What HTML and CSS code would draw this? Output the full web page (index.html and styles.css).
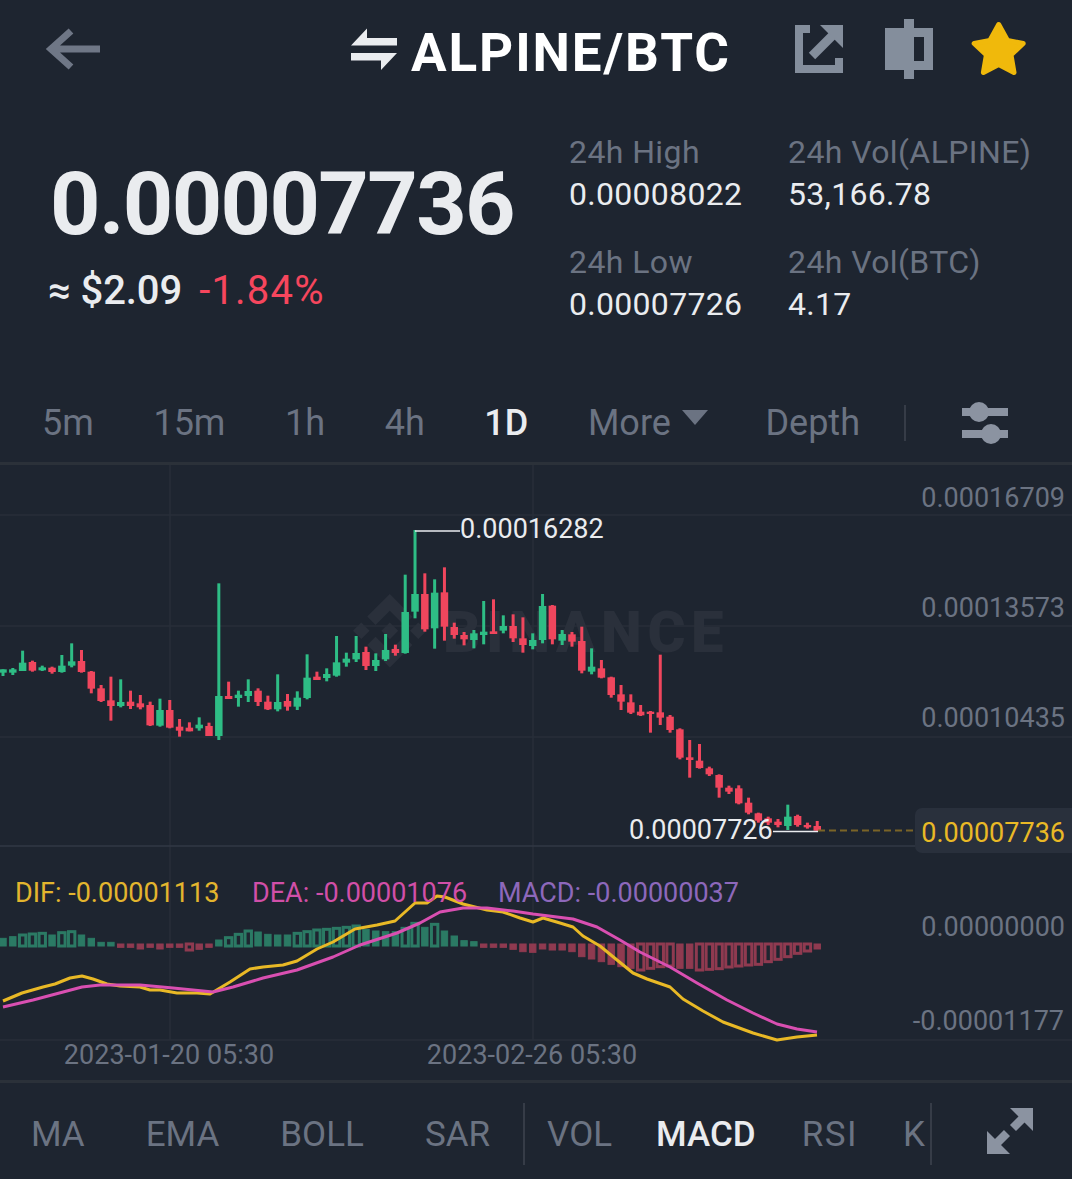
FILE: index.html
```html
<!DOCTYPE html>
<html lang="en">
<head>
  <meta charset="UTF-8" />
  <meta name="viewport" content="width=device-width, initial-scale=1.0"/>
  <title>ALPINE/BTC</title>
  <link rel="stylesheet" href="styles.css">
</head>
<body>

  <div class="top-bar">
    <svg class="back-icon" viewBox="44 28 58 42"><path d="M100 49H52M71 31 51 49l20 18"/></svg>
    <svg class="swap-icon" viewBox="350 27 48 43"><path d="M367 27.5V37h30v7.5h-46zM351 52h46l-16 17v-9.5h-30z"/></svg>
    <div class="pair">ALPINE/BTC</div>
    <svg class="share-icon" viewBox="795 25 48 48"><path d="M795 25h15v8h-7v32h32v-7h8v15h-48zM820 25h23v23z"/><path class="shaft" d="m812 56 20-20"/></svg>
    <svg class="candle-icon" viewBox="885 19 49 60"><path fill-rule="evenodd" d="M904 19h10v9h19v42h-19v9h-10v-9h-19V28h19zM914 37v24h10V37z"/></svg>
    <svg class="star-icon" viewBox="970 20 58 58"><path d="M998.7 24.500 1007.500 40.500 1023.200 43.500 1011 55 1014 72.500 998.700 64.500 983.400 72.500 986.400 55 974.200 43.500 989.900 40.500z"/></svg>
  </div>

  <div class="summary">
    <div class="price-box">
      <div class="price">0.00007736</div>
      <div class="price-sub">
        <span class="fiat">≈ $2.09</span>
        <span class="change">-1.84%</span>
      </div>
    </div>
    <div class="stats">
      <div class="stat"><div class="stat-label">24h High</div><div class="stat-value">0.00008022</div></div>
      <div class="stat"><div class="stat-label">24h Vol(ALPINE)</div><div class="stat-value">53,166.78</div></div>
      <div class="stat"><div class="stat-label">24h Low</div><div class="stat-value">0.00007726</div></div>
      <div class="stat"><div class="stat-label">24h Vol(BTC)</div><div class="stat-value">4.17</div></div>
    </div>
  </div>

  <div class="tabs">
    <span class="tab">5m</span>
    <span class="tab">15m</span>
    <span class="tab">1h</span>
    <span class="tab">4h</span>
    <span class="tab active">1D</span>
    <span class="tab more">More<i class="caret"></i></span>
    <span class="tab">Depth</span>
    <span class="divider"></span>
    <svg class="sliders-icon" viewBox="964 397 47 42"><path d="M964 403h46v8h-46zM964 425h46v8h-46z"/><circle cx="981" cy="407" r="10"/><circle cx="993" cy="429" r="10"/></svg>
  </div>

  <svg class="chart" id="chart" viewBox="0 465 1072 615">
    <g class="grid">
      <path d="M0 515H1072M0 626H1072M0 737H1072M0 1040H1072M170 465V1040M533 465V1040"/>
      <path class="grid-split" d="M0 846H1072"/>
    </g>

    <g class="watermark">
      <path transform="translate(353 594) scale(2.3)" d="M9.800 13.450 16 7.250l6.200 6.200 3.600-3.600L16 0 6.200 9.800zM0 16l3.600-3.600L7.200 16l-3.600 3.600zm9.800 2.550 6.200 6.200 6.200-6.200 3.600 3.600L16 32 6.200 22.200zM24.800 16l3.600-3.600L32 16l-3.600 3.600zM19.650 16 16 12.350 12.350 16 16 19.650z"/>
      <text x="443" y="652">BINANCE</text>
    </g>

    <g id="histogram"></g>
    <g id="candles"></g>

    <polyline class="line-dif" points="3,1001 22,993 43,987 55,984 70,978 82,976 93,979 107,984 120,986 140,987 150,990 160,990 177,993 197,993 210,994 230,982 250,969 263,967 283,965 297,961 317,949 333,942 355,929 377,925 395,921 415,903 420,903 427,903 437,896 445,897 463,904 487,910 503,912 520,918 533,922 543,918 560,923 573,927 583,936 600,946 617,960 633,973 647,979 670,987 683,999 703,1011 723,1022 753,1033 777,1040 797,1037 817,1035"/>
    <polyline class="line-dea" points="3,1007 33,1000 82,987 100,985 140,985 173,988 213,992 233,987 263,978 297,970 333,957 360,945 397,933 420,923 440,912 463,908 487,908 513,911 533,914 573,919 597,927 620,940 640,952 670,967 697,983 727,1000 753,1013 777,1024 797,1029 817,1032"/>

    <path class="price-dash" d="M818 830.500H914"/>
    <rect class="price-tag" x="915" y="808" width="170" height="45" rx="7"/>

    <g class="axis">
      <text x="1065" y="507">0.00016709</text>
      <text x="1065" y="617">0.00013573</text>
      <text x="1065" y="727">0.00010435</text>
      <text x="1065" y="936">0.00000000</text>
      <text x="1064" y="1030">-0.00001177</text>
    </g>
    <text class="last-price" x="1065" y="842">0.00007736</text>

    <path class="mark-line" d="M415 531H460M773 831.500H818"/>
    <text class="mark" x="460" y="538">0.00016282</text>
    <text class="mark" x="629" y="839">0.00007726</text>

    <text class="macd-dif" x="15" y="902">DIF: -0.00001113</text>
    <text class="macd-dea" x="252" y="902">DEA: -0.00001076</text>
    <text class="macd-macd" x="498" y="902">MACD: -0.00000037</text>

    <text class="date" x="169" y="1064">2023-01-20 05:30</text>
    <text class="date" x="532" y="1064">2023-02-26 05:30</text>
  </svg>

  <div class="indicators">
    <span class="ind">MA</span>
    <span class="ind">EMA</span>
    <span class="ind">BOLL</span>
    <span class="ind">SAR</span>
    <span class="divider main-end"></span>
    <span class="ind vol">VOL</span>
    <span class="ind macd active">MACD</span>
    <span class="ind rsi">RSI</span>
    <span class="ind k">K</span>
    <span class="divider sub-end"></span>
    <svg class="expand-icon" viewBox="979 1108 46 46"><path d="M1002 1108h23v23zM979 1131v23h23z"/><path class="shaft" d="m1005 1128 10-10M989 1143l10-10"/></svg>
  </div>

  <script src="chart.js"></script>
</body>
</html>
```

FILE: styles.css
```css
* {
  box-sizing: border-box;
  margin: 0;
  padding: 0;
}

body {
  width: 1072px;
  height: 1179px;
  overflow: hidden;
  background-color: #1e2530;
  font-family: "Roboto", sans-serif;
  color: #eaecef;
}

/* header */
.top-bar {
  display: flex;
  align-items: center;
  height: 98px;
  padding-left: 44px;
}

.top-bar svg {
  flex: none;
}

.back-icon {
  width: 58px;
  height: 42px;
  fill: none;
  stroke: #6f7786;
  stroke-width: 7;
}

.swap-icon {
  width: 48px;
  height: 43px;
  margin-left: 248px;
  fill: #eaecef;
}

.pair {
  width: 384px;
  margin-left: 13px;
  padding-top: 8px;
  font-size: 53px;
  font-weight: 700;
  color: #fff;
  letter-spacing: 1.9px;
}

.share-icon {
  width: 48px;
  height: 48px;
  fill: #848e9c;
}

.shaft {
  fill: none;
  stroke: #848e9c;
  stroke-width: 9;
}

.candle-icon {
  width: 49px;
  height: 60px;
  margin-left: 42px;
  fill: #848e9c;
}

.star-icon {
  width: 58px;
  height: 58px;
  margin-left: 36px;
  fill: #f0b90b;
  stroke: #f0b90b;
  stroke-width: 5;
  stroke-linejoin: round;
}

/* price summary */
.summary {
  display: flex;
  height: 286px;
}

.price-box {
  width: 569px;
  padding: 53px 0 0 50px;
}

.price {
  font-size: 88px;
  font-weight: 700;
  line-height: 106px;
  letter-spacing: -1.6px;
}

.price-sub {
  display: flex;
  gap: 17px;
  margin: 11px 0 0 -2px;
  font-size: 40px;
  line-height: 46px;
}

.fiat {
  font-weight: 500;
  letter-spacing: -0.1px;
}

.change {
  letter-spacing: 1.2px;
  color: #f6465d;
}

.stats {
  display: grid;
  grid-template-columns: 219px 260px;
  grid-auto-rows: 110px;
  padding-top: 32px;
}

.stat-label {
  font-size: 32px;
  line-height: 44px;
  letter-spacing: 0.4px;
  color: #6b7382;
}

.stat-value {
  font-size: 32px;
  line-height: 41px;
  letter-spacing: 0.3px;
  color: #eaecef;
}

/* interval tabs */
.tabs {
  display: flex;
  align-items: center;
  gap: 59.6px;
  height: 81px;
  padding: 0 0 1px 42px;
  border-bottom: 3px solid #2b3139;
  font-size: 36px;
  color: #6b7382;
}

.tab.active,
.ind.active {
  color: #eaecef;
  font-weight: 500;
}

.more {
  display: flex;
  align-items: center;
  gap: 11px;
  margin-right: -2px;
}

.caret {
  width: 0;
  height: 0;
  margin-bottom: 10px;
  border-left: 13px solid transparent;
  border-right: 13px solid transparent;
  border-top: 15px solid #6b7382;
}

.divider {
  flex: none;
  width: 2px;
  height: 36px;
  background-color: #363c47;
}

.tabs .divider {
  margin-left: -16px;
}

.sliders-icon {
  width: 47px;
  height: 42px;
  margin-left: -3px;
  fill: #8b93a1;
}

/* chart */
.chart {
  display: block;
  width: 1072px;
  height: 615px;
}

.grid path {
  fill: none;
  stroke: #282e39;
  stroke-width: 1.5;
}

.grid .grid-split {
  stroke: #323845;
}

.watermark {
  fill: #2a303b;
}

.chart .watermark text {
  font-size: 58px;
  font-weight: 900;
  letter-spacing: 5.6px;
}

.up {
  stroke: #2ebd85;
}

.down {
  stroke: #f0465d;
}

.wick {
  stroke-width: 3;
}

.body {
  stroke-width: 7.5;
}

.hist-up {
  fill: #2b7a64;
  stroke: #2b7a64;
}

.hist-down {
  fill: #8f3a50;
  stroke: #8f3a50;
}

.hist-hollow {
  fill: none;
  stroke-width: 3;
}

.line-dif,
.line-dea {
  fill: none;
  stroke-width: 3;
  stroke-linejoin: round;
}

.line-dif {
  stroke: #e9b926;
}

.line-dea {
  stroke: #d94fb1;
}

.price-dash {
  stroke: #7a6427;
  stroke-width: 2;
  stroke-dasharray: 7 4;
}

.price-tag {
  fill: #29303c;
}

.chart text {
  font-size: 27px;
}

.axis text {
  text-anchor: end;
  fill: #6b7382;
}

.last-price {
  text-anchor: end;
  fill: #e9b926;
}

.mark {
  fill: #eaecef;
}

.mark-line {
  fill: none;
  stroke: #eaecef;
  stroke-width: 1.5;
}

.macd-dif {
  fill: #e3b52e;
}

.macd-dea {
  fill: #d14fa8;
}

.macd-macd {
  fill: #8d68bb;
}

.date {
  text-anchor: middle;
  fill: #6b7382;
}

/* indicator tabs */
.indicators {
  display: flex;
  align-items: center;
  gap: 61px;
  height: 99px;
  padding: 6px 0 0 31px;
  border-top: 3px solid #2b3139;
  font-size: 35px;
  color: #6b7382;
}

.indicators .divider {
  height: 62px;
  margin-left: -28px;
}

.indicators .vol {
  margin-left: -39px;
}

.indicators .macd {
  margin-left: -17px;
}

.indicators .rsi {
  margin-left: -15px;
  letter-spacing: 1.5px;
}

.indicators .k {
  margin-left: -16px;
}

.indicators .sub-end {
  margin-left: -56px;
}

.expand-icon {
  width: 46px;
  height: 46px;
  margin: -6px 0 0 -6px;
  fill: #8b93a1;
}

.expand-icon .shaft {
  stroke: #8b93a1;
  stroke-width: 8.5;
}
```

FILE: chart.js
```js
// candle data read off the picture at 3x: [up, wickTop, wickBottom, bodyTop, bodyBottom]
const leftCandles = [
  [1,508,528,508,518],[1,504,525,508,518],[1,452,513,488,513],[0,482,515,486,512],[1,497,513,502,511],
  [0,500,521,503,516],[1,465,518,497,516],[1,430,502,484,497],[0,450,518,483,516],[0,513,580,515,566],
  [0,555,606,565,603],[0,530,662,601,618],[1,538,622,606,618],[0,572,627,605,618],[0,585,628,610,622],
  [0,605,678,615,676],[1,596,680,630,677],[0,600,685,630,683],[0,657,710,680,692],[0,667,694,683,694],
  [1,652,692,674,685],[0,668,708,678,708],[1,250,720,588,708],[0,545,597,588,597],[1,572,620,584,594],
  [1,538,606,573,588],[0,565,618,572,606],[0,587,630,605,628],[1,523,634,606,628],[0,582,632,603,620],
  [1,574,630,593,620],[1,463,598,533,594],[0,515,540,530,540],[1,505,544,522,534],[1,408,530,487,527],
  [1,458,500,476,488],[1,408,486,459,478],[0,440,510,456,498],[1,460,513,480,498],[1,402,483,450,478],
  [0,434,467,447,459],[1,224,461,336,459]
];
const rightCandles = [
  [1,60,325,252,305],[0,190,365,252,358],[1,208,416,248,355],[0,172,392,247,350],[0,338,386,351,375],
  [0,366,406,375,388],[1,360,415,370,390],[1,273,403,365,375],[0,268,372,364,372],[1,316,370,348,362],
  [0,313,396,348,385],[0,322,428,385,405],[1,370,418,390,408],[1,252,400,288,390],[0,285,403,287,388],
  [1,360,405,372,392],[0,366,410,373,395],[0,350,490,393,482],[1,415,493,470,485],[0,450,505,475,503],
  [0,500,563,502,555],[0,525,600,553,575],[0,553,612,577,608],[0,585,618,605,616],[0,603,668,605,612],
  [0,434,645,607,623],[0,615,668,620,660],[0,655,748,658,743],[0,690,803,742,750],[0,702,776,752,774],
  [0,770,798,775,793],[0,793,863,795,833],[0,827,852,833,845],[0,826,883,835,880],[0,863,913,878,908],
  [0,908,938,910,932],[0,920,945,925,938],[0,927,952,935,945],[1,884,960,920,948],[0,914,950,918,945],
  [0,938,956,945,952],[0,933,962,948,962]
];

// macd bars, 3x height from the zero line, up is positive
const bars = [
  20,25,30,33,35,30,37,40,30,20,8,8,-7,-7,-12,-7,-12,-7,-7,-15,-13,-7,
  15,22,32,42,39,32,30,30,35,40,45,47,50,53,57,47,42,40,40,50,65,53,62,42,27,13,10,
  -7,-7,-7,-13,-20,-22,-12,-15,-15,-20,-35,-42,-50,-58,-65,-70,-75,-70,-65,-63,-70,-70,
  -75,-73,-71,-66,-63,-60,-58,-50,-43,-35,-25,-18,-12
];
const hollow = [2,3,4,6,7,19,23,24,25,30,31,32,33,34,35,36,41,42,44,65,66,67,68,71,72,73,74,75,76,77,78,79,80,81,82];

const SVG_NS = "http://www.w3.org/2000/svg";
const candleX = i => 3 + 9.81 * i;

function add(parent, tag, attrs) {
  const el = document.createElementNS(SVG_NS, tag);
  for (const key in attrs) el.setAttribute(key, attrs[key]);
  parent.appendChild(el);
}

function drawCandles() {
  const group = document.getElementById("candles");
  const all = [
    ...leftCandles.map(c => [c, 500]),
    ...rightCandles.map(c => [c, 510])
  ];
  all.forEach(([c, offset], i) => {
    const x = candleX(i);
    const y = v => offset + v / 3;
    const color = c[0] ? "up" : "down";
    add(group, "path", { class: `wick ${color}`, d: `M${x} ${y(c[1])}V${y(c[2])}` });
    add(group, "path", { class: `body ${color}`, d: `M${x} ${y(c[3])}V${y(c[4])}` });
  });
}

function drawBars() {
  const group = document.getElementById("histogram");
  const zero = 945;
  bars.forEach((value, i) => {
    const h = Math.abs(value) / 3 + 1;
    const isHollow = hollow.includes(i);
    const cls = (value > 0 ? "hist-up" : "hist-down") + (isHollow ? " hist-hollow" : "");
    add(group, "rect", {
      class: cls,
      x: candleX(i) - 3.2,
      y: value > 0 ? zero - h + 1 : zero - 1,
      width: 6.4,
      height: h
    });
  });
}

drawBars();
drawCandles();
```
